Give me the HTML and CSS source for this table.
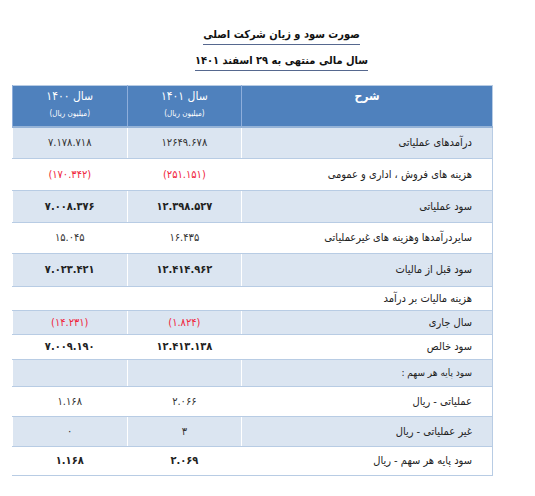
FILE: index.html
```html
<!DOCTYPE html>
<html lang="fa">

<head>
    <meta charset="utf-8">
    <title>صورت سود و زیان</title>
    <link rel="stylesheet" href="styles.css">
</head>

<body>
    <div class="titles">
        <p class="title"><span>صورت سود و زیان شرکت اصلی</span></p>
        <p class="title sub"><span>سال مالی منتهی به ۲۹ اسفند ۱۴۰۱</span></p>
    </div>

    <table class="report">
        <tr class="head">
            <th class="label-col">شرح</th>
            <th class="num-col">سال ۱۴۰۱<small>(میلیون ریال)</small></th>
            <th class="num-col">سال ۱۴۰۰<small>(میلیون ریال)</small></th>
        </tr>
        <tr class="alt h31">
            <td>درآمدهای عملیاتی</td>
            <td class="num">۱۲۶۴۹.۶۷۸</td>
            <td class="num">۷.۱۷۸.۷۱۸</td>
        </tr>
        <tr class="h32">
            <td>هزینه های فروش ، اداری و عمومی</td>
            <td class="num neg">(۲۵۱.۱۵۱)</td>
            <td class="num neg">(۱۷۰.۳۴۲)</td>
        </tr>
        <tr class="alt h32 strong">
            <td>سود عملیاتی</td>
            <td class="num">۱۲.۳۹۸.۵۲۷</td>
            <td class="num">۷.۰۰۸.۳۷۶</td>
        </tr>
        <tr class="h31">
            <td>سایردرآمدها وهزینه های غیرعملیاتی</td>
            <td class="num">۱۶.۴۳۵</td>
            <td class="num">۱۵.۰۴۵</td>
        </tr>
        <tr class="alt h34 strong">
            <td>سود قبل از مالیات</td>
            <td class="num">۱۲.۴۱۴.۹۶۲</td>
            <td class="num">۷.۰۲۳.۴۲۱</td>
        </tr>
        <tr class="h24">
            <td colspan="3">هزینه مالیات بر درآمد</td>
        </tr>
        <tr class="alt h24">
            <td>سال جاری</td>
            <td class="num neg">(۱.۸۲۴)</td>
            <td class="num neg">(۱۴.۲۳۱)</td>
        </tr>
        <tr class="h25 strong">
            <td>سود خالص</td>
            <td class="num">۱۲.۴۱۳.۱۳۸</td>
            <td class="num">۷.۰۰۹.۱۹۰</td>
        </tr>
        <tr class="alt h27 small-label">
            <td>سود پایه هر سهم :</td>
            <td></td>
            <td></td>
        </tr>
        <tr class="h30">
            <td>عملیاتی - ریال</td>
            <td class="num">۲.۰۶۶</td>
            <td class="num">۱.۱۶۸</td>
        </tr>
        <tr class="alt h30">
            <td>غیر عملیاتی - ریال</td>
            <td class="num">۳</td>
            <td class="num">۰</td>
        </tr>
        <tr class="h29 strong">
            <td>سود پایه هر سهم - ریال</td>
            <td class="num">۲.۰۶۹</td>
            <td class="num">۱.۱۶۸</td>
        </tr>
    </table>
</body>

</html>
```

FILE: styles.css
```css
body {
    margin: 0;
    background: #fff;
    font-family: "DejaVu Sans Condensed", "DejaVu Sans", sans-serif;
    color: #222;
}

p {
    margin: 0;
}

.titles {
    padding: 22px 0 0 28px;
    box-sizing: border-box;
    height: 85px;
    direction: rtl;
}

.title {
    text-align: center;
    font-weight: bold;
    font-size: 11px;
    line-height: 26px;
    color: #111;
}

.title span {
    display: inline-block;
    line-height: 16px;
    border-bottom: 1px solid #56688f;
    padding-bottom: 1px;
}

.report {
    direction: rtl;
    margin-left: 12px;
    width: 481px;
    border-collapse: collapse;
    border: 1px solid #b8cce4;
    font-size: 11px;
}

.report td {
    padding: 0 20px 0 0;
    border-bottom: 1px solid #b8cce4;
    border-left: 1px solid #fff;
}

.head th {
    background: #4f81bd;
    color: #fff;
    height: 36px;
    font-weight: normal;
    font-size: 12px;
    border-left: 1px solid #8eaedb;
    border-bottom: 2px solid #95b3d7;
    vertical-align: top;
    padding-top: 3px;
}

.head .label-col {
    font-weight: bold;
    width: 252px;
}

.head .num-col {
    width: 113px;
}

.head small {
    display: block;
    font-size: 8px;
    margin-top: 6px;
}

.alt td {
    background: #dbe5f1;
}

.report td.num {
    padding: 0;
    text-align: center;
    direction: ltr;
    color: #333;
}

.report td.neg {
    color: #f0243c;
}

.strong td.num {
    font-weight: bold;
    color: #222;
}

.small-label td {
    font-size: 10px;
}

.h24 { height: 24px; }
.h25 { height: 25px; }
.h27 { height: 27px; }
.h29 { height: 29px; }
.h30 { height: 30px; }
.h31 { height: 31px; }
.h32 { height: 32px; }
.h34 { height: 33px; }
```
